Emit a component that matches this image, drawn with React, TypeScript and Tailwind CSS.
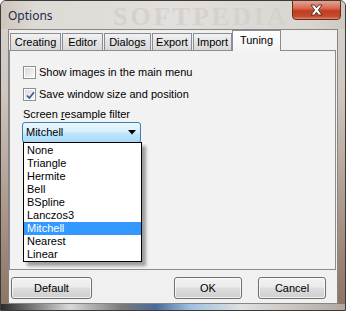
import React from "react";

const items = ["None", "Triangle", "Hermite", "Bell", "BSpline", "Lanczos3", "Mitchell", "Nearest", "Linear"];

function CheckBox({ checked }: { checked?: boolean }) {
  return (
    <div className="w-[13px] h-[13px] border border-[#8e8f8f] bg-white p-px shrink-0">
      <div className="w-full h-full bg-[linear-gradient(135deg,#dcdcdc,#f6f6f6)] relative">
        {checked && (
          <svg className="absolute left-[1px] top-[1px]" width="9" height="9" viewBox="0 0 9 9">
            <path d="M1 4.5 L3.4 7 L8 1.3" stroke="#3a5a9e" strokeWidth="1.7" fill="none" />
          </svg>
        )}
      </div>
    </div>
  );
}

function Tab({ label, w }: { label: string; w: string }) {
  return (
    <div
      className={`${w} h-[17px] border border-b-0 border-[#898c95] bg-[linear-gradient(#f2f2f2,#e3e3e3_50%,#d9d9d9)] flex items-center justify-center text-[11px] leading-[13px] text-black pt-[1px]`}
    >
      {label}
    </div>
  );
}

function Button({ label, w }: { label: string; w: string }) {
  return (
    <div
      className={`${w} h-[22px] rounded-[3px] border border-[#707070] bg-[linear-gradient(#f2f2f2,#ebebeb_45%,#dddddd_50%,#cfcfcf)] flex items-center justify-center text-[11px] text-black shadow-[inset_0_0_0_1px_rgba(255,255,255,0.7)]`}
    >
      {label}
    </div>
  );
}

export default function App() {
  return (
    <div
      className="relative w-[346px] h-[311px] overflow-hidden rounded-t-[6px] border border-[#3a3a3a] bg-[linear-gradient(#d9d5d0,#cfc6bf_30%,#a48e80_75%,#8a7264)]"
      style={{ fontFamily: '"Liberation Sans", Arial, sans-serif' }}
    >
      {/* Title bar */}
      <div className="relative h-[28px] flex items-center pl-[7px] bg-[linear-gradient(90deg,#cfc4bb,#dedad6_10%,#e2dfdc_50%,#d9d5d1_90%,#cfc8c2)]">
        <span
          className="text-[12px] text-[#1c2d4d] pt-[1px] relative z-10"
          style={{ fontFamily: '"Noto Sans", "Open Sans", sans-serif' }}
        >
          Options
        </span>
        <span
          className="absolute left-[112px] top-[3px] text-[26px] leading-[26px] tracking-[3px] text-[#d6d1cc] font-bold"
          style={{ fontFamily: '"Liberation Serif", serif' }}
        >
          SOFTPEDIA
        </span>
        {/* Close button */}
        <div className="absolute right-[4px] top-[-1px] w-[49px] h-[20px] rounded-b-[4px] border border-[#6a2a1c] bg-[linear-gradient(#e7a28f,#d56b52_40%,#c23c20_55%,#c54a2c_85%,#dd8a6e)] flex items-center justify-center">
          <svg width="15" height="12" viewBox="0 0 15 12">
            <path
              d="M2 1 L5.5 1 L7.5 3.8 L9.5 1 L13 1 L9.4 6 L13 11 L9.5 11 L7.5 8.2 L5.5 11 L2 11 L5.6 6 Z"
              fill="#ffffff"
              stroke="#4a2a25"
              strokeWidth="0.9"
            />
          </svg>
        </div>
      </div>

      <div className="flex">
        <div className="w-[7px]" />
        {/* Client area */}
        <div className="w-[330px] h-[275px] bg-[#f0f0f0] border border-[#8a8580] flex flex-col">
          {/* Tab row */}
          <div className="h-[20px] flex items-end gap-px pl-[1px] relative z-10">
            <Tab label="Creating" w="w-[51px]" />
            <Tab label="Editor" w="w-[41px]" />
            <Tab label="Dialogs" w="w-[47px]" />
            <Tab label="Export" w="w-[40px]" />
            <Tab label="Import" w="w-[39px]" />
            <div className="w-[49px] h-[21px] -ml-px -mb-px border border-b-0 border-[#898c95] bg-[linear-gradient(#ffffff,#f3f3f3)] flex items-start justify-center pt-[3px] text-[11px] leading-[13px] text-black">
              Tuning
            </div>
          </div>
          {/* Panel */}
          <div className="w-[327px] h-[220px] border border-[#898c95] bg-[#f2f2f2] flex flex-col pl-[13px] pt-[15px] text-[11px] leading-[13px] text-black">
            <div className="flex items-center gap-[3px]">
              <CheckBox />
              <span>Show images in the main menu</span>
            </div>
            <div className="flex items-center gap-[3px] mt-[9px]">
              <CheckBox checked />
              <span>Save window size and position</span>
            </div>
            <div className="mt-[7px]">
              Screen <span className="underline">r</span>esample filter
            </div>
            <div className="mt-[1px] -ml-px w-[119px] h-[21px] rounded-[3px] border border-[#3c7fb1] bg-[linear-gradient(#eaf6fd,#d9f0fc_45%,#bee6fd_55%,#a7d9f5)] flex items-center justify-between pl-[3px] pr-[4px]">
              <span>Mitchell</span>
              <svg width="8" height="5" viewBox="0 0 8 5">
                <path d="M0 0 L8 0 L4 4.5 Z" fill="#000" />
              </svg>
            </div>
          </div>
          {/* Buttons */}
          <div className="flex mt-[7px] pl-[2px]">
            <Button label="Default" w="w-[81px]" />
            <div className="ml-[82px]">
              <Button label="OK" w="w-[68px]" />
            </div>
            <div className="ml-[16px]">
              <Button label="Cancel" w="w-[68px]" />
            </div>
          </div>
        </div>
      </div>

      {/* Bottom frame tint */}
      <div className="absolute left-0 right-0 bottom-0 h-[6px] bg-[linear-gradient(90deg,#2a2a2a,#d8d8d8_20%,#7a7a7a_35%,#4a6a9a_45%,#9fc0e0_55%,#e0e0e0_70%,#b0a8a0)]" />

      {/* Dropdown list */}
      <div className="absolute left-[22px] top-[141px] w-[119px] h-[120px] border border-black bg-white pt-px shadow-[4px_4px_3px_rgba(0,0,0,0.35)] text-[11px] leading-[13px] text-black">
        {items.map((it) => (
          <div
            key={it}
            className={`h-[13px] pl-[3px] ${it === "Mitchell" ? "bg-[#3399ff] text-white" : ""}`}
          >
            {it}
          </div>
        ))}
      </div>
    </div>
  );
}
